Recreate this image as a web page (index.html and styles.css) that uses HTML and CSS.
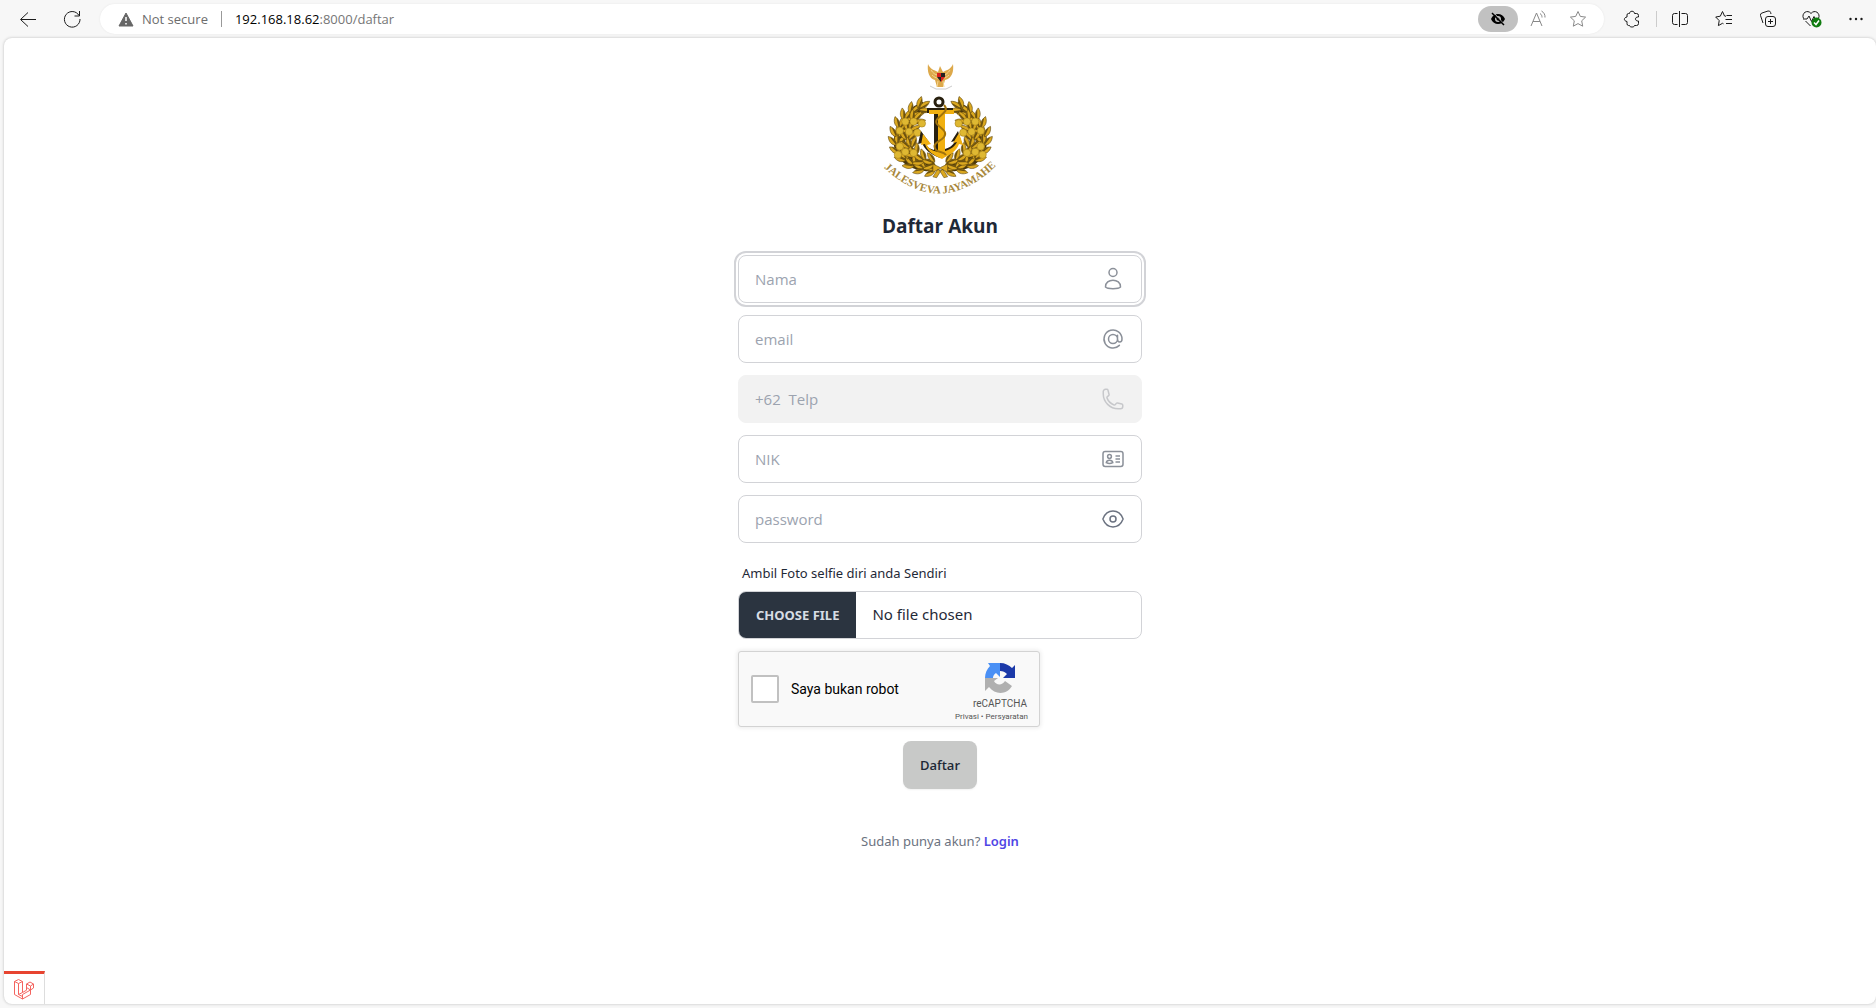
FILE: index.html
```html
<!DOCTYPE html>
<html lang="id">
<head>
<meta charset="utf-8">
<title>Daftar Akun</title>
<meta name="viewport" content="width=device-width, initial-scale=1">
<link rel="stylesheet" href="styles.css">
</head>
<body>
<div class="browser">
  <header class="toolbar">
    <button class="tool" type="button" aria-label="Back"><svg width="18" height="18" viewBox="0 0 18 18"><path d="M17 9.500H2M9 2.500l-7.500 7 7.500 7"/></svg></button>
    <button class="tool" type="button" aria-label="Refresh"><svg width="18" height="18" viewBox="0 0 18 18"><path d="M16 5.500A7.800 7.800 0 1 0 17 9M16.500 1v5h-5"/></svg></button>
    <div class="address">
      <span class="security"><svg class="warning" width="16" height="15" viewBox="0 0 16 15"><path stroke-linejoin="round" d="M8 1 15 14H1z"/><path class="mark" d="M8 5v4M8 11v1.500"/></svg>Not secure</span>
      <span class="url"><b>192.168.18.62</b>:8000/daftar</span>
      <button class="tracking" type="button" aria-label="Tracking prevention"><svg width="16" height="16" viewBox="0 0 16 16"><path class="solid" d="M1 8c1.500-3.300 4-5 7-5s5.500 1.700 7 5c-1.500 3.300-4 5-7 5S2.500 11.300 1 8"/><circle class="pupil" cx="8" cy="8" r="3"/><circle class="solid" cx="8" cy="8" r="1.500"/><path class="gap" d="M3.500 1.500l11 12"/><path class="slash" d="M2 2l12 12"/></svg></button>
      <button class="tool faint" type="button" aria-label="Read aloud"><svg width="18" height="18" viewBox="0 0 18 18"><path d="M2 16 7.500 3 13 16M4 11.500h7M11 3.500c1.500 1 2 2.300 2 4M12.500 1c2.500 1.500 3.700 3.700 3.500 6.500"/></svg></button>
      <button class="tool faint" type="button" aria-label="Add to favorites"><svg width="18" height="18" viewBox="0 0 18 18"><path d="M9 1.500l2.300 4.900 5.300.7-3.900 3.700 1 5.400L9 13.600l-4.700 2.600 1-5.400L1.400 7.100l5.300-.7z"/></svg></button>
    </div>
    <nav class="tools">
      <button class="tool" type="button" aria-label="Extensions"><svg width="18" height="18" viewBox="0 0 18 18"><path d="M6.500 3.500c0-3 5-3 5 0h2q2 0 2 2V7c-4-.5-4 4.500 0 4v2.500q0 2-2 2h-2c0 2-5 2-5 0h-1q-1.500 0-1.500-2v-2C.5 11 .5 7.500 4 7V5q0-1.500 1.500-1.500z"/></svg></button>
      <span class="divider"></span>
      <button class="tool" type="button" aria-label="Split screen"><svg width="18" height="18" viewBox="0 0 18 18"><path d="M6.500 3.500h-3q-2 0-2 2v7q0 2 2 2h3M10.500 3.500h4q2 0 2 2v7q0 2-2 2h-4M8.500 1v16"/></svg></button>
      <button class="tool" type="button" aria-label="Favorites"><svg width="18" height="18" viewBox="0 0 18 18"><path d="M11 6.300 9.500 6 7.500 1.500 5.300 6.200.7 7l3.500 3.600-.8 5 4.100-2.300 1 .5M11.500 5.500H17M10.500 9.500H17M11 13.500h6"/></svg></button>
      <button class="tool" type="button" aria-label="Collections"><svg width="18" height="18" viewBox="0 0 18 18"><rect x="6.500" y="6.500" width="10" height="10" rx="2.500"/><path d="M11.500 9v5M9 11.500h5M4 13 1.500 5.500Q1 3.500 3 3l6-2q2-.5 2.600 1.500l.4 1.500"/></svg></button>
      <button class="tool" type="button" aria-label="Browser essentials"><svg width="20" height="18" viewBox="0 0 20 18"><path d="M1.500 8.500C-1 3 5.500-1 9 3.500 12.500-1 19 3 16.500 8.500M3.500 11l5 5M1 9h4l2-3 2.500 5.500L12 6.500 13 9"/><circle class="ok" cx="14.500" cy="12.500" r="5"/><path class="mark" d="M12 12.500l2 2 3-4"/></svg></button>
      <button class="tool" type="button" aria-label="More"><svg width="18" height="18" viewBox="0 0 18 18"><circle class="dot" cx="3.500" cy="9" r="1.200"/><circle class="dot" cx="9" cy="9" r="1.200"/><circle class="dot" cx="14.500" cy="9" r="1.200"/></svg></button>
    </nav>
  </header>
  <main class="page">
    <form class="signup">
      <svg class="emblem" width="116" height="132" viewBox="0 0 116 132" role="img" aria-label="Jalesveva Jayamahe">
        <defs>
          <g id="leaf"><path class="leaf" d="M0 6C-4 2-3-3 0-7 3-3 4 2 0 6Z"/><path class="shade" d="M0 6C3 3 3-2 1-5Z"/></g>
          <g id="spray"><use href="#leaf" transform="translate(-5 1) rotate(-38)"/><use href="#leaf" transform="translate(5 1) rotate(38)"/><use href="#leaf" transform="translate(0 -2)"/></g>
          <g id="branch">
            <path class="stem" d="M52 103C20 104 8 84 18 62 24 51 32 43 42 39"/>
            <use href="#spray" transform="translate(48 106) rotate(-80)"/><use href="#spray" transform="translate(37 104) rotate(-65)"/>
            <use href="#spray" transform="translate(27 99) rotate(-48)"/><use href="#spray" transform="translate(19 92) rotate(-35)"/>
            <use href="#spray" transform="translate(14 84) rotate(-18)"/><use href="#spray" transform="translate(12 75) rotate(-4)"/>
            <use href="#spray" transform="translate(13 66) rotate(8)"/><use href="#spray" transform="translate(17 57) rotate(20)"/>
            <use href="#spray" transform="translate(23 49) rotate(33)"/><use href="#spray" transform="translate(31 43) rotate(46)"/>
            <use href="#spray" transform="translate(40 38) rotate(56)"/>
            <use href="#spray" transform="translate(47 99) rotate(-75)"/><use href="#spray" transform="translate(37 95) rotate(-58)"/>
            <use href="#spray" transform="translate(29 87) rotate(-38)"/><use href="#spray" transform="translate(25 78) rotate(-18)"/>
            <use href="#spray" transform="translate(24 69) rotate(4)"/><use href="#spray" transform="translate(27 60) rotate(22)"/>
            <use href="#spray" transform="translate(33 51) rotate(40)"/>
            <g class="fruit"><circle cx="21" cy="55" r="4"/><circle cx="30" cy="55" r="4"/><circle cx="39" cy="57" r="4"/><circle cx="15" cy="65" r="4"/><circle cx="25" cy="66" r="4"/><circle cx="34" cy="67" r="4"/><circle cx="15" cy="82" r="4"/><circle cx="13" cy="91" r="4"/><circle cx="21" cy="88" r="4"/><circle cx="30" cy="89" r="4"/></g>
          </g>
          <path id="motto" d="M2 106Q58 158 114 104"/>
        </defs>
        <g class="garuda" transform="translate(1 1)"><path d="M52 17C46 16 44 8 45 1c2 5 6 6 10 8l2-6 3 6c4-2 8-3 10-8 1 7-1 15-8 16l-2 7h-6z"/><path class="feather" d="M48 7c2 3 4 5 7 5M67 7c-2 3-4 5-7 5M49 12c2 2 4 3 6 3M66 12c-2 2-4 3-6 3M55 18l-1 6M60 18l1 6"/><path class="red" d="M54 10h4v4h-4zM58 14h4l-4 5z"/><path class="black" d="M58 10h4v4h-4zM54 14h4v5z"/><path class="ribbon" d="M47 23l6 3h10l6-3"/></g>
        <g transform="translate(4 9) scale(.92)">
          <use href="#branch"/><use href="#branch" transform="matrix(-1 0 0 1 118 0)"/>
          <path class="leaf" d="M51 101l8 4 8-4v9l-8-4-8 4zM56 107l-5 8 4 1 5-8zM62 107l5 8-4 1-5-8z"/>
        </g>
        <g class="anchor">
          <circle class="shackle" cx="57" cy="40" r="4"/>
          <path class="iron" d="M45 46h26v5h-8v36c6-2 8-4 10-8l-4 1 7-11 4 13-4-1c-3 8-9 10-18 15-10-4-15-8-18-15l-4 1 3-13 8 11-4 1c2 4 5 6 9 7V51h-7z"/>
          <path class="gold" d="M47 48h25v4h-9v37c7-2 10-5 12-9l-4 1 6-10 4 12-4-1c-3 8-9 10-17 15-9-4-15-8-17-15l-4 1 2-11 8 10-4 1c2 4 6 6 11 7V52h-9z"/>
          <path class="rope" d="M62 43c8 8-12 12-7 19 4 5 11 7 7 13-4 5-13 6-8 13 3 3 7 1 10 5"/>
        </g>
        <text class="motto"><textPath href="#motto" startOffset="50%" text-anchor="middle">JALESVEVA JAYAMAHE</textPath></text>
      </svg>
      <h1>Daftar Akun</h1>
      <div class="fields">
        <label class="field focused"><input type="text" placeholder="Nama" aria-label="Nama"><svg viewBox="0 0 24 24"><circle cx="12" cy="5.500" r="4"/><path d="M4.500 20c-.5-9 15.500-9 15 0-2 2.300-13 2.300-15 0z"/></svg></label>
        <label class="field"><input type="email" placeholder="email" aria-label="email"><svg viewBox="0 0 24 24"><path stroke-linecap="round" d="M16.500 12a4.500 4.500 0 1 1-9 0 4.500 4.500 0 0 1 9 0zm0 0c0 1.657 1.007 3 2.250 3S21 13.657 21 12a9 9 0 1 0-2.636 6.364M16.500 12V8.250"/></svg></label>
        <label class="field disabled"><input type="tel" placeholder="+62&nbsp; Telp" aria-label="Telp" disabled><svg viewBox="0 0 24 24"><path d="M2.250 6.750c0 8.284 6.716 15 15 15h2.250a2.250 2.250 0 0 0 2.250-2.250v-1.372c0-.516-.351-.966-.852-1.091l-4.423-1.106c-.44-.11-.902.055-1.173.417l-.97 1.293c-.282.376-.769.542-1.210.38a12.035 12.035 0 0 1-7.143-7.143c-.162-.441.004-.928.380-1.210l1.293-.970c.363-.271.527-.734.417-1.173L6.963 3.102a1.125 1.125 0 0 0-1.091-.852H4.500A2.250 2.250 0 0 0 2.250 4.500v2.250z"/></svg></label>
        <label class="field"><input type="text" placeholder="NIK" aria-label="NIK"><svg viewBox="0 0 24 24"><rect x="2" y="4.500" width="20" height="15" rx="2.200"/><circle cx="8.500" cy="9.500" r="1.900"/><path d="M5.300 15.700c.5-3.300 6-3.300 6.500 0-2 1-4.500 1-6.500 0zM14.500 9H19M14.500 12H19M14.500 15H19"/></svg></label>
        <label class="field eye"><input type="password" placeholder="password" aria-label="password"><svg viewBox="0 0 24 24"><path d="M2 11.700C6 1.500 18 1.500 22 11.700q.1.300 0 .6C18 22.500 6 22.500 2 12.300q-.1-.3 0-.6z"/><circle cx="12" cy="12" r="3"/></svg></label>
      </div>
      <label class="caption" for="selfie">Ambil Foto selfie diri anda Sendiri</label>
      <input class="file" id="selfie" type="file">
      <div class="captcha">
        <label class="robot"><input type="checkbox">Saya bukan robot</label>
        <div class="brand">
          <svg width="30" height="30" viewBox="0 0 30 30"><path fill="#1c3aa9" d="M15 0c5 0 9 2 12 5l3-3v13H18l4-4c-2-2-4-3-7-3z"/><path fill="#4a90f5" d="M15 0v14l-4-4c-2 1-3 3-3 5H0c0-5 2-9 5-12L3 0z"/><path fill="#b0b0b0" d="M0 15h13l-4 3c2 4 8 5 11 0l7 5c-5 9-17 9-23 1l-4 4z"/></svg>
          <span class="name">reCAPTCHA</span>
          <span class="terms"><a href="#">Privasi</a> • <a href="#">Persyaratan</a></span>
        </div>
      </div>
      <button class="submit" type="submit">Daftar</button>
      <p class="login">Sudah punya akun? <a href="#">Login</a></p>
    </form>
    <button class="debug" type="button" aria-label="Debugbar"><svg width="20" height="21" viewBox="0 0 20 21"><path d="M.5 2.500l4-2 4 2v11l4-2.300V5M.5 2.500v13l8 4.500 8-4.500V11l3-2V5L16 3l-3.500 2v3.500l4 2.500M.5 2.500l4 2 4-2M4.500 4.500v11l4-2M12.500 5l4 2 3-2M16.500 7v4l-8 4.500V20M4.500 15.500l4 2"/></svg></button>
  </main>
</div>
</body>
</html>
```
FILE: styles.css
```css
* { box-sizing: border-box; }
body {
  margin: 0;
  background: #f7f7f7;
  color: #1f2937;
  font: 16px/24px "Open Sans", "Noto Sans", sans-serif;
}
button { border: 0; padding: 0; background: none; font: inherit; color: inherit; }
a { color: inherit; text-decoration: none; }
svg { flex: none; fill: none; stroke: currentColor; }

.browser { display: flex; flex-direction: column; min-height: 100vh; padding: 0 0 4px 4px; }
.toolbar { display: flex; align-items: center; height: 38px; padding-left: 9px; color: #1b1b1b; }
.tool { display: grid; place-items: center; width: 30px; height: 30px; }
.tool + .tool { margin-left: 14px; }
.tool.faint { color: #888; }
.address {
  display: flex;
  align-items: center;
  flex: 1;
  height: 30px;
  margin-left: 13px;
  padding: 0 11px 0 18px;
  border-radius: 15px;
  background: #fff;
  font-size: 13px;
  box-shadow: 0 0 2px #e4e4e4;
}
.security { display: flex; align-items: center; gap: 8px; padding-right: 13px; border-right: 1px solid #999; color: #6d6d6d; line-height: 16px; }
.warning { fill: #666; stroke: #666; }
.mark { stroke: #fff; stroke-width: 1.500; }
.url { flex: 1; padding-left: 13px; color: #767676; }
.url b { color: #000; font-weight: 400; }
.tracking { display: grid; place-items: center; width: 40px; height: 26px; margin-right: 5px; border-radius: 13px; background: #c1c1c1; color: #000; }
.tracking + .tool + .tool { margin-left: 10px; }
.solid { fill: #000; stroke: none; }
.pupil { fill: #c1c1c1; stroke: none; }
.gap { stroke: #c1c1c1; }
.slash { stroke-width: 1.500; }
.tools { display: flex; align-items: center; margin-left: 13px; padding-right: 5px; }
.divider { width: 1px; height: 16px; margin: 0 8px 0 9px; background: #ccc; }
.dot { fill: currentColor; stroke: none; }
.ok { fill: #107c10; stroke: none; }

.page {
  display: flex;
  flex-direction: column;
  flex: 1;
  border-radius: 8px;
  background: #fff;
  box-shadow: 0 0 3px #bbb;
  overflow: hidden;
}
.signup { display: flex; flex-direction: column; width: 404px; max-width: 100%; margin: 24px auto; }
.emblem { align-self: center; }
h1 { margin: 18px 0 15px; text-align: center; font-size: 19px; line-height: 28px; font-weight: 700; }
.fields { display: flex; flex-direction: column; gap: 12px; }
.field { display: flex; align-items: center; height: 48px; padding: 0 16px; border: 1px solid #d2d3d7; border-radius: 8px; color: #8b9099; }
.field input { flex: 1; min-width: 0; padding: 0; border: 0; outline: 0; background: none; font: 15px/24px "Open Sans", sans-serif; color: #1f2937; }
.field input::placeholder { color: #9ca3af; opacity: 1; }
.field svg { width: 24px; height: 24px; stroke-width: 1.500; }
.focused { outline: 2px solid #d2d3d7; outline-offset: 2px; }
.disabled { border-color: #f2f2f2; background: #f2f2f2; }
.disabled svg { color: #c7c8cb; }
.eye svg { color: #6b7280; }
.caption { margin: 20px 4px 8px; font: 13px/20px "Noto Sans", sans-serif; }
.file { width: 100%; height: 48px; border: 1px solid #d2d3d7; border-radius: 8px; overflow: hidden; font: 15px/44px "Noto Sans", sans-serif; color: #1f2937; }
.file::file-selector-button {
  height: 46px;
  margin: 0 16px 0 0;
  padding: 0 17px;
  border: 0;
  background: #2b3440;
  color: #d7dde4;
  font: 700 13px/44px "Noto Sans", sans-serif;
  text-transform: uppercase;
}
.captcha {
  display: flex;
  align-items: center;
  justify-content: space-between;
  width: 302px;
  height: 76px;
  margin: 12px 0 14px;
  padding: 0 11px 0 12px;
  border: 1px solid #d3d3d3;
  border-radius: 3px;
  background: #f9f9f9;
  box-shadow: 0 0 4px 1px rgba(0, 0, 0, .08);
  color: #000;
  font: 14px/18px Roboto, sans-serif;
}
.robot { display: flex; align-items: center; gap: 12px; }
.robot input { appearance: none; width: 28px; height: 28px; margin: 0; border: 2px solid #c1c1c1; border-radius: 2px; background: #fff; }
.brand { display: flex; flex-direction: column; align-items: flex-end; padding-top: 7px; color: #555; }
.brand svg { margin-right: 13px; stroke: none; }
.name { margin: 5px 1px 0 0; font-size: 10px; line-height: 12px; }
.terms { font-size: 8px; line-height: 13px; }
.submit { align-self: center; height: 48px; padding: 0 17px; border-radius: 8px; background: #c8c9c8; font-size: 13px; font-weight: 600; box-shadow: 0 1px 2px rgba(0, 0, 0, .06); }
.login { margin: 42px 0 0; text-align: center; font: 13px/20px "Noto Sans", sans-serif; color: #6b7280; }
.login a { color: #4f46e5; font-weight: 600; }
.debug { display: grid; place-items: center; width: 41px; height: 33px; margin-top: auto; border-top: 3px solid #e74430; border-right: 1px solid #ddd; color: #f4645f; }
.debug svg { stroke-width: 1; }

.leaf { fill: #dba81f; stroke: #5a430c; stroke-width: .6; }
.shade { fill: #6b5110; stroke: none; }
.stem { stroke: #4a380c; stroke-width: 12; }
.fruit { fill: #dfb832; stroke: #a07c18; stroke-width: .6; }
.shackle { stroke: #28200f; stroke-width: 3; }
.iron { fill: #28200f; stroke: none; }
.gold { fill: #f0b010; stroke: none; }
.rope { stroke: #a0730c; stroke-width: 2; }
.garuda { fill: #dda94b; stroke: none; }
.feather { stroke: #f4d590; }
.red { fill: #d8211e; stroke: none; }
.black { fill: #222; stroke: none; }
.ribbon { fill: none; stroke: #ccc; }
.motto { fill: #a8883c; stroke: none; font: 700 11px "Liberation Serif", serif; }
```
